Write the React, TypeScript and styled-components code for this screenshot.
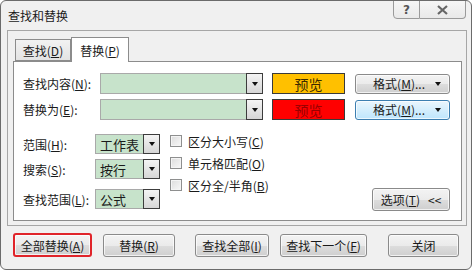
import React from "react";
import styled, { createGlobalStyle } from "styled-components";

const Global = createGlobalStyle`
  html, body { margin: 0; padding: 0; background: #ffffff; }
  body { font-family: "Noto Sans CJK SC", "Noto Sans", sans-serif; font-size: 12px; color: #1a1a1a; }
  * { box-sizing: border-box; }
`;

const Window = styled.div`
  width: 472px;
  height: 270px;
  border: 1px solid #6b6b6b;
  border-radius: 6px;
  background: #f0f0f0;
  display: flex;
  flex-direction: column;
  overflow: hidden;
`;

const TitleBar = styled.div`
  height: 28px;
  display: flex;
  align-items: flex-start;
  padding-left: 7px;
`;

const TitleText = styled.div`
  line-height: 30px;
  font-size: 12px;
  flex: 1;
`;

const CaptionGroup = styled.div`
  display: flex;
  margin-right: 5px;
  margin-top: -1px;
`;

const CaptionBtn = styled.div<{ $w: number; $first?: boolean }>`
  width: ${(p) => p.$w}px;
  height: 19px;
  border: 1px solid #9a9a9a;
  border-left-width: ${(p) => (p.$first ? 1 : 0)}px;
  border-radius: ${(p) => (p.$first ? "0 0 0 4px" : "0 0 4px 0")};
  background: linear-gradient(#f6f6f6, #e9e9e9);
  display: flex;
  align-items: center;
  justify-content: center;
  color: #555;
  font-family: "DejaVu Sans", sans-serif;
  font-size: 12px;
  font-weight: bold;
`;

const Frame = styled.div`
  margin: 1px 4px 0 6px;
  height: 196px;
  border: 1px solid #a6a6a6;
  padding: 6px 4px 4px 5px;
  display: flex;
  flex-direction: column;
`;

const TabRow = styled.div`
  display: flex;
  align-items: flex-end;
  padding-left: 2px;
  height: 24px;
  position: relative;
  z-index: 1;
`;

const Tab = styled.div<{ $active?: boolean; $w: number }>`
  width: ${(p) => p.$w}px;
  height: ${(p) => (p.$active ? 25 : 22)}px;
  border: 1px solid #8c8c8c;
  border-bottom: ${(p) => (p.$active ? "none" : "1px solid #8c8c8c")};
  background: ${(p) => (p.$active ? "#ffffff" : "linear-gradient(#f2f2f2, #e3e3e3)")};
  margin-bottom: ${(p) => (p.$active ? -1 : 0)}px;
  display: flex;
  align-items: center;
  justify-content: center;
  font-size: 12px;
  padding-top: ${(p) => (p.$active ? 0 : 1)}px;
`;

const Panel = styled.div`
  flex: 1;
  background: #ffffff;
  border: 1px solid #8c8c8c;
  padding: 11px 0 0 9px;
  display: flex;
  flex-direction: column;
`;

const Row = styled.div<{ $mt?: number }>`
  display: flex;
  align-items: center;
  height: 21px;
  margin-top: ${(p) => p.$mt ?? 0}px;
`;

const Label = styled.div<{ $w: number }>`
  width: ${(p) => p.$w}px;
  font-size: 12px;
  white-space: nowrap;
`;

const GreenField = styled.div<{ $w: number; $h: number }>`
  width: ${(p) => p.$w}px;
  height: ${(p) => p.$h}px;
  background: #c7e3cb;
  border: 1px solid #a9a9a9;
  border-right: none;
  display: flex;
  align-items: center;
  padding-left: 4px;
  font-size: 13px;
`;

const DropBtn = styled.div<{ $h: number }>`
  width: 17px;
  height: ${(p) => p.$h}px;
  border: 1px solid #3c3c3c;
  background: linear-gradient(#f4f4f4, #d6d6d6);
  display: flex;
  align-items: center;
  justify-content: center;
`;

const Arrow = styled.div`
  width: 0;
  height: 0;
  border-left: 3px solid transparent;
  border-right: 3px solid transparent;
  border-top: 4px solid #111;
`;

const Preview = styled.div<{ $bg: string; $fg: string }>`
  width: 73px;
  height: 21px;
  margin-left: 9px;
  background: ${(p) => p.$bg};
  border: 1px solid #3a3a3a;
  color: ${(p) => p.$fg};
  display: flex;
  align-items: center;
  justify-content: center;
  font-size: 14px;
`;

const Button = styled.div<{ $w: number; $focus?: boolean; $red?: boolean }>`
  width: ${(p) => p.$w}px;
  height: ${(p) => (p.$red ? 24 : 23)}px;
  border: ${(p) => (p.$red ? "2px solid #e0242a" : p.$focus ? "1px solid #3c7fb1" : "1px solid #8a8a8a")};
  border-radius: 3px;
  background: ${(p) =>
    p.$focus ? "linear-gradient(#eaf6fd, #bee6fd)" : "linear-gradient(#f3f3f3 0%, #ebebeb 50%, #dddddd 51%, #cfcfcf 100%)"};
  box-shadow: inset 0 0 0 1px rgba(255, 255, 255, 0.7);
  display: flex;
  align-items: center;
  justify-content: center;
  font-size: 12px;
  white-space: nowrap;
`;

const FormatBtn = styled(Button)`
  height: 20px;
  margin-left: 10px;
  justify-content: flex-end;
  padding-right: 8px;
  gap: 10px;
`;

const Lower = styled.div`
  display: flex;
  margin-top: 14px;
`;

const LeftCol = styled.div`
  display: flex;
  flex-direction: column;
`;

const SelRow = styled.div<{ $mt?: number }>`
  display: flex;
  align-items: center;
  height: 20px;
  margin-top: ${(p) => p.$mt ?? 0}px;
`;

const CheckCol = styled.div`
  display: flex;
  flex-direction: column;
  margin-left: 10px;
  margin-top: -4px;
`;

const CheckRow = styled.div`
  display: flex;
  align-items: center;
  height: 22px;
  gap: 6px;
`;

const Box = styled.div`
  width: 12px;
  height: 12px;
  border: 1px solid #8e8f8f;
  background: linear-gradient(135deg, #dcdcdc, #f8f8f8);
  box-shadow: inset 0 0 0 1px #f4f4f4;
`;

const OptBtn = styled(Button)`
  margin-left: auto;
  margin-right: 11px;
  margin-top: 54px;
  gap: 8px;
`;

const BottomBar = styled.div`
  display: flex;
  align-items: center;
  padding-left: 12px;
  margin-top: 7px;
`;

const Gap = styled.div<{ $w: number }>`
  width: ${(p) => p.$w}px;
  flex: none;
`;

export default function App() {
  return (
    <>
      <Global />
      <Window>
        <TitleBar>
          <TitleText>查找和替换</TitleText>
          <CaptionGroup>
            <CaptionBtn $w={27} $first>
              ?
            </CaptionBtn>
            <CaptionBtn $w={46}>
              <svg width="11" height="10" viewBox="0 0 11 10">
                <path d="M1 1 L10 9 M10 1 L1 9" stroke="#666" strokeWidth="2.2" fill="none" />
              </svg>
            </CaptionBtn>
          </CaptionGroup>
        </TitleBar>
        <Frame>
          <TabRow>
            <Tab $w={56}>
              查找(<u>D</u>)
            </Tab>
            <Tab $w={58} $active>
              替换(<u>P</u>)
            </Tab>
          </TabRow>
          <Panel>
            <Row>
              <Label $w={77}>
                查找内容(<u>N</u>):
              </Label>
              <GreenField $w={146} $h={21} />
              <DropBtn $h={21}>
                <Arrow />
              </DropBtn>
              <Preview $bg="#ffc000" $fg="#3b2a00">
                预览
              </Preview>
              <FormatBtn $w={95}>
                <span>
                  格式(<u>M</u>)...
                </span>
                <Arrow />
              </FormatBtn>
            </Row>
            <Row $mt={5}>
              <Label $w={77}>
                替换为(<u>E</u>):
              </Label>
              <GreenField $w={146} $h={21} />
              <DropBtn $h={21}>
                <Arrow />
              </DropBtn>
              <Preview $bg="#ff0000" $fg="#9a0000">
                预览
              </Preview>
              <FormatBtn $w={95} $focus>
                <span>
                  格式(<u>M</u>)...
                </span>
                <Arrow />
              </FormatBtn>
            </Row>
            <Lower>
              <LeftCol>
                <SelRow>
                  <Label $w={72}>
                    范围(<u>H</u>):
                  </Label>
                  <GreenField $w={48} $h={20}>工作表</GreenField>
                  <DropBtn $h={20}>
                    <Arrow />
                  </DropBtn>
                </SelRow>
                <SelRow $mt={5}>
                  <Label $w={72}>
                    搜索(<u>S</u>):
                  </Label>
                  <GreenField $w={48} $h={20}>按行</GreenField>
                  <DropBtn $h={20}>
                    <Arrow />
                  </DropBtn>
                </SelRow>
                <SelRow $mt={10}>
                  <Label $w={72}>
                    查找范围(<u>L</u>):
                  </Label>
                  <GreenField $w={48} $h={20}>公式</GreenField>
                  <DropBtn $h={20}>
                    <Arrow />
                  </DropBtn>
                </SelRow>
              </LeftCol>
              <CheckCol>
                <CheckRow>
                  <Box />
                  <span>
                    区分大小写(<u>C</u>)
                  </span>
                </CheckRow>
                <CheckRow>
                  <Box />
                  <span>
                    单元格匹配(<u>O</u>)
                  </span>
                </CheckRow>
                <CheckRow>
                  <Box />
                  <span>
                    区分全/半角(<u>B</u>)
                  </span>
                </CheckRow>
              </CheckCol>
              <OptBtn $w={78}>
                <span>
                  选项(<u>T</u>)
                </span>
                <span>&lt;&lt;</span>
              </OptBtn>
            </Lower>
          </Panel>
        </Frame>
        <BottomBar>
          <Button $w={79} $red>
            全部替换(<u>A</u>)
          </Button>
          <Gap $w={11} />
          <Button $w={72}>
            替换(<u>R</u>)
          </Button>
          <Gap $w={20} />
          <Button $w={74}>
            查找全部(<u>I</u>)
          </Button>
          <Gap $w={11} />
          <Button $w={87}>
            查找下一个(<u>F</u>)
          </Button>
          <Gap $w={21} />
          <Button $w={71}>关闭</Button>
        </BottomBar>
      </Window>
    </>
  );
}
